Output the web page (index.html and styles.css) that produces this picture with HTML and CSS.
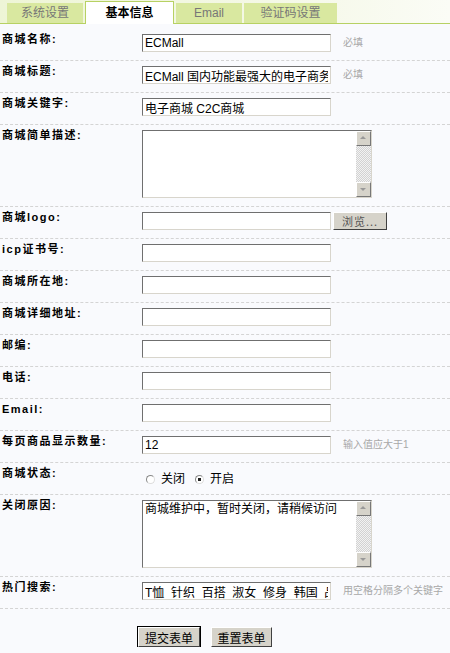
FILE: index.html
```html
<!DOCTYPE html>
<html lang="zh-CN">
<head>
  <meta charset="UTF-8">
  <title>基本信息</title>
  <link rel="stylesheet" href="styles.css">
</head>
<body>

  <!-- tabs -->
  <div class="tab-bar">
    <span class="tab">系统设置</span>
    <span class="tab active">基本信息</span>
    <span class="tab">Email</span>
    <span class="tab wide">验证码设置</span>
  </div>

  <form class="setting-form">
    <div class="row">
      <label class="label">商城名称:</label>
      <input type="text" class="text-box" value="ECMall">
      <span class="hint">必填</span>
    </div>
    <div class="row">
      <label class="label">商城标题:</label>
      <input type="text" class="text-box" value="ECMall 国内功能最强大的电子商务解决方案">
      <span class="hint">必填</span>
    </div>
    <div class="row">
      <label class="label">商城关键字:</label>
      <input type="text" class="text-box" value="电子商城 C2C商城">
    </div>
    <div class="row">
      <label class="label">商城简单描述:</label>
      <div class="area-box">
        <textarea class="area"></textarea>
        <div class="scroll">
          <span class="arrow up"></span>
          <span class="track"></span>
          <span class="arrow down"></span>
        </div>
      </div>
    </div>
    <div class="row">
      <label class="label">商城logo:</label>
      <input type="text" class="text-box">
      <button type="button" class="btn browse">浏览...</button>
    </div>
    <div class="row">
      <label class="label">icp证书号:</label>
      <input type="text" class="text-box">
    </div>
    <div class="row">
      <label class="label">商城所在地:</label>
      <input type="text" class="text-box">
    </div>
    <div class="row">
      <label class="label">商城详细地址:</label>
      <input type="text" class="text-box">
    </div>
    <div class="row">
      <label class="label">邮编:</label>
      <input type="text" class="text-box">
    </div>
    <div class="row">
      <label class="label">电话:</label>
      <input type="text" class="text-box">
    </div>
    <div class="row">
      <label class="label">Email:</label>
      <input type="text" class="text-box">
    </div>
    <div class="row">
      <label class="label">每页商品显示数量:</label>
      <input type="text" class="text-box" value="12">
      <span class="hint">输入值应大于1</span>
    </div>
    <div class="row">
      <label class="label">商城状态:</label>
      <div class="radios">
        <input type="radio" name="status" class="radio"> <span>关闭</span>
        <input type="radio" name="status" class="radio" checked> <span>开启</span>
      </div>
    </div>
    <div class="row">
      <label class="label">关闭原因:</label>
      <div class="area-box">
        <textarea class="area">商城维护中，暂时关闭，请稍候访问</textarea>
        <div class="scroll">
          <span class="arrow up"></span>
          <span class="track"></span>
          <span class="arrow down"></span>
        </div>
      </div>
    </div>
    <div class="row">
      <label class="label">热门搜索:</label>
      <input type="text" class="text-box" value="T恤  针织  百搭  淑女  修身  韩国  品牌  S">
      <span class="hint">用空格分隔多个关键字</span>
    </div>

    <div class="button-row">
      <button type="button" class="btn submit">提交表单</button>
      <button type="button" class="btn">重置表单</button>
    </div>
  </form>

</body>
</html>
```

FILE: styles.css
```css
body {
  margin: 0;
  background-color: #f9fafd;
  font-family: "Liberation Sans", "Noto Sans CJK SC", sans-serif;
  font-size: 12px;
  color: #000;
}

/* tabs */
.tab-bar {
  height: 23px;
  display: flex;
  align-items: flex-end;
  gap: 2px;
  padding-left: 7px;
  border-bottom: 1px solid #b7d163;
  background: linear-gradient(to right, #eef5d6, #f4f8e6 60%, #fbfcf6);
}

.tab {
  width: 76px;
  height: 20px;
  line-height: 20px;
  text-align: center;
  background-color: #d9e8a0;
  color: #777;
  font-size: 12px;
}

.tab.active {
  width: 87px;
  height: 22px;
  line-height: 22px;
  margin-bottom: -1px;
  background-color: #fff;
  border: 1px solid #b7d163;
  border-bottom: none;
  color: #000;
  font-weight: bold;
  font-size: 12px;
}

.tab:nth-child(3) {
  width: 66px;
}

.tab.wide {
  width: 93px;
}

/* form rows */
.setting-form {
  padding-top: 5px;
}

.row {
  display: flex;
  align-items: flex-start;
  padding: 5px 0 8px;
  border-bottom: 1px dashed #d4d4d4;
  white-space: nowrap;
}

.label {
  width: 140px;
  padding-left: 2px;
  font-size: 11px;
  font-weight: bold;
  letter-spacing: 1.5px;
  line-height: 14px;
  margin-top: -2px;
  flex-shrink: 0;
}

.text-box {
  box-sizing: border-box;
  width: 189px;
  height: 18px;
  margin: 0;
  padding: 1px 2px;
  border: 1px solid;
  border-color: #6f6f6f #d8d5cc #d8d5cc #6f6f6f;
  background: #fff;
  font-family: "Liberation Sans", "Noto Sans CJK SC", sans-serif;
  font-size: 12px;
  line-height: 14px;
  color: #000;
  outline: none;
  flex-shrink: 0;
}

.hint {
  margin-left: 12px;
  color: #a8a8a8;
  font-size: 10px;
  line-height: 18px;
}

/* textarea with classic scrollbar */
.area-box {
  box-sizing: border-box;
  width: 230px;
  height: 68px;
  display: flex;
  border: 1px solid;
  border-color: #6f6f6f #d8d5cc #d8d5cc #6f6f6f;
  background: #fff;
  flex-shrink: 0;
}

.area {
  flex: 1;
  border: none;
  margin: 0;
  padding: 1px 2px;
  resize: none;
  outline: none;
  font-family: "Liberation Sans", "Noto Sans CJK SC", sans-serif;
  font-size: 12px;
  line-height: 15px;
  background: transparent;
}

.scroll {
  width: 15px;
  display: flex;
  flex-direction: column;
}

.arrow {
  box-sizing: border-box;
  height: 15px;
  background-color: #d6d3ca;
  border: 1px solid;
  border-color: #fff #777 #777 #fff;
  position: relative;
}

.arrow::after {
  content: "";
  position: absolute;
  left: 3px;
  border-left: 3px solid transparent;
  border-right: 3px solid transparent;
}

.arrow.up::after {
  top: 4px;
  border-bottom: 3px solid #999;
}

.arrow.down::after {
  top: 5px;
  border-top: 3px solid #999;
}

.track {
  flex: 1;
  background-color: #ebebeb;
  background-image: repeating-conic-gradient(#d2d2d2 0 25%, #f2f2f2 0 50%);
  background-size: 2px 2px;
}

/* radios */
.radios {
  display: flex;
  align-items: center;
  gap: 4px;
  padding: 4px 0 0 4px;
  font-size: 12px;
  line-height: 14px;
}

.radio {
  appearance: none;
  width: 9px;
  height: 9px;
  margin: 0 2px 0 0;
  border-radius: 50%;
  border: 1px solid;
  border-color: #888 #ddd #ddd #888;
  background: #fff;
}

.radio:checked {
  background: radial-gradient(circle, #222 0 1.6px, #fff 2px);
}

.radios span {
  margin-right: 6px;
}

/* buttons */
.btn {
  box-sizing: border-box;
  height: 19px;
  padding: 0;
  background-color: #d6d3ca;
  border: 1px solid;
  border-color: #fff #404040 #404040 #fff;
  font-family: "Noto Sans CJK SC", sans-serif;
  font-size: 12px;
  line-height: 15px;
  color: #000;
  white-space: nowrap;
  cursor: pointer;
  flex-shrink: 0;
}

.browse {
  width: 54px;
  height: 18px;
  margin-left: 2px;
  color: #555;
  font-size: 11px;
  letter-spacing: 1px;
}

.button-row {
  display: flex;
  gap: 11px;
  padding: 18px 0 0 138px;
}

.button-row .btn {
  width: 61px;
  height: 20px;
}

.button-row .submit {
  outline: 1px solid #000;
  outline-offset: 0;
  width: 62px;
}
```
